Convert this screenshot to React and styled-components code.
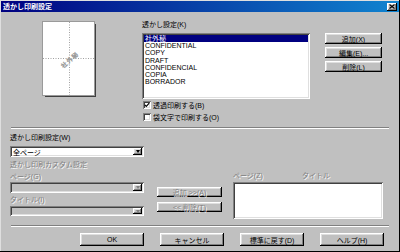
import React from 'react';
import styled, { createGlobalStyle } from 'styled-components';

const GlobalStyle = createGlobalStyle`
  html, body {
    margin: 0;
    padding: 0;
    background: #c0c0c0;
  }
  body {
    font-family: "Liberation Sans", "Noto Sans CJK JP", sans-serif;
    font-size: 7px;
    color: #000;
  }
`;

const raised = `
  box-shadow: inset -1px -1px #000, inset 1px 1px #fff,
    inset -2px -2px #808080, inset 2px 2px #dfdfdf;
`;

const sunken = `
  box-shadow: inset 1px 1px #808080, inset -1px -1px #fff,
    inset 2px 2px #404040, inset -2px -2px #dfdfdf;
`;

const Window = styled.div`
  width: 400px;
  height: 252px;
  box-sizing: border-box;
  padding: 1px;
  background: #c0c0c0;
  box-shadow: inset -1px -1px #000, inset 1px 1px #dfdfdf;
  display: flex;
  flex-direction: column;
`;

const TitleBar = styled.div`
  height: 11px;
  flex: none;
  display: flex;
  align-items: center;
  justify-content: space-between;
  padding: 0 2px;
  background: linear-gradient(90deg, #000080, #1084d0);
  color: #fff;
  font-weight: bold;
  line-height: 11px;
`;

const CloseBox = styled.div`
  width: 10px;
  height: 8px;
  background: #c0c0c0;
  ${raised}
  display: flex;
  align-items: center;
  justify-content: center;
`;

const TopSection = styled.div`
  height: 115px;
  display: flex;
  flex: none;
`;

const PreviewColumn = styled.div`
  width: 141px;
  box-sizing: border-box;
  padding: 10px 0 0 42px;
`;

const Page = styled.div`
  width: 51px;
  height: 73px;
  background: #fff;
  box-shadow: 1px 1px 0 #808080, 2px 2px 0 #404040;
  outline: 1px solid #9a9a9a;
`;

const ListColumn = styled.div`
  width: 168px;
  padding-top: 9px;
`;

const Label = styled.div`
  height: 8px;
  line-height: 8px;
  white-space: nowrap;
  margin-top: ${p => p.$mt || 0}px;
  margin-bottom: ${p => p.$mb || 0}px;
  color: ${p => (p.$disabled ? '#808080' : '#000')};
  text-shadow: ${p => (p.$disabled ? '1px 1px 0 #fff' : 'none')};
`;

const ListBox = styled.div`
  height: ${p => p.$h}px;
  box-sizing: border-box;
  padding: 2px;
  background: #fff;
  ${sunken}
  margin-top: ${p => p.$mt || 0}px;
`;

const ListItem = styled.div`
  height: 7.2px;
  line-height: 7.2px;
  padding-left: 1px;
  white-space: nowrap;
  background: ${p => (p.$selected ? '#000080' : 'transparent')};
  color: ${p => (p.$selected ? '#fff' : '#000')};
`;

const CheckRow = styled.label`
  display: flex;
  align-items: center;
  gap: 2px;
  height: 8px;
  padding-left: 1px;
  margin-top: ${p => p.$mt}px;
  white-space: nowrap;
`;

const CheckBox = styled.span`
  width: 8px;
  height: 8px;
  box-sizing: border-box;
  background: #fff;
  ${sunken}
  display: flex;
  align-items: center;
  justify-content: center;
  flex: none;
`;

const ButtonColumn = styled.div`
  margin-left: ${p => p.$ml}px;
  padding-top: ${p => p.$pt}px;
  display: flex;
  flex-direction: column;
  gap: ${p => p.$gap}px;
`;

const Button = styled.div`
  width: ${p => p.$w || 57}px;
  height: ${p => p.$h || 11}px;
  box-sizing: border-box;
  background: #c0c0c0;
  ${raised}
  display: flex;
  align-items: center;
  justify-content: center;
  white-space: nowrap;
  color: ${p => (p.$disabled ? '#808080' : '#000')};
  text-shadow: ${p => (p.$disabled ? '1px 1px 0 #fff' : 'none')};
`;

const Separator = styled.div`
  margin: 0 10px;
  height: 0;
  border-top: 1px solid #808080;
  border-bottom: 1px solid #fff;
  flex: none;
`;

const BottomSection = styled.div`
  height: 96px;
  display: flex;
  padding-left: 9px;
  flex: none;
`;

const LeftColumn = styled.div`
  width: 134px;
  padding-top: 5px;
`;

const Combo = styled.div`
  height: ${p => p.$h}px;
  margin-top: ${p => p.$mt}px;
  box-sizing: border-box;
  padding: 2px 2px 2px 3px;
  background: ${p => (p.$disabled ? '#c0c0c0' : '#fff')};
  ${sunken}
  display: flex;
  align-items: center;
  justify-content: space-between;
  white-space: nowrap;
`;

const ArrowButton = styled.div`
  width: 9px;
  height: 100%;
  box-sizing: border-box;
  background: #c0c0c0;
  ${raised}
  display: flex;
  align-items: center;
  justify-content: center;
`;

const Arrow = styled.span`
  width: 0;
  height: 0;
  border-left: 2.5px solid transparent;
  border-right: 2.5px solid transparent;
  border-top: 3px solid ${p => (p.$disabled ? '#808080' : '#000')};
`;

const RightColumn = styled.div`
  margin-left: 11px;
  width: 150px;
  padding-top: 43px;
`;

const HeaderRow = styled.div`
  display: flex;
  height: 8px;
  line-height: 8px;
  color: #808080;
  text-shadow: 1px 1px 0 #fff;
`;

const HeaderCell = styled.span`
  width: ${p => p.$w}px;
  white-space: nowrap;
`;

const ActionRow = styled.div`
  display: flex;
  justify-content: flex-end;
  gap: 16px;
  padding: 6px 15px 0 0;
`;

function Check() {
  return (
    <svg width="6" height="6" viewBox="0 0 6 6">
      <path d="M0.8 2.8 L2.3 4.4 L5.2 1.2" fill="none" stroke="#000" strokeWidth="1.2" />
    </svg>
  );
}

function ComboBox({ text, h, mt, disabled }) {
  return (
    <Combo $h={h} $mt={mt} $disabled={disabled}>
      <span>{text}</span>
      <ArrowButton>
        <Arrow $disabled={disabled} />
      </ArrowButton>
    </Combo>
  );
}

const watermarks = ['社外秘', 'CONFIDENTIAL', 'COPY', 'DRAFT', 'CONFIDENCIAL', 'COPIA', 'BORRADOR'];

export default function App() {
  return (
    <>
      <GlobalStyle />
      <Window>
        <TitleBar>
          <span>透かし印刷設定</span>
          <CloseBox>
            <svg width="6" height="5" viewBox="0 0 6 5">
              <path d="M0.5 0.5 L5.5 4.5 M5.5 0.5 L0.5 4.5" stroke="#000" strokeWidth="1.1" />
            </svg>
          </CloseBox>
        </TitleBar>

        <TopSection>
          <PreviewColumn>
            <Page>
              <svg width="51" height="73" viewBox="0 0 51 73">
                <line x1="26.5" y1="0" x2="26.5" y2="73" stroke="#a0a0a0" strokeDasharray="1 1.5" />
                <line x1="0" y1="36.5" x2="51" y2="36.5" stroke="#a0a0a0" strokeDasharray="1 1.5" />
                <text
                  x="27"
                  y="40"
                  fontSize="6"
                  textAnchor="middle"
                  fill="#d0d0d0"
                  stroke="#9a9a9a"
                  strokeWidth="0.4"
                  letterSpacing="1"
                  transform="rotate(-42 27 38)"
                  fontFamily="Noto Sans CJK JP, sans-serif"
                >
                  社外秘
                </text>
              </svg>
            </Page>
          </PreviewColumn>

          <ListColumn>
            <Label $mb={4}>透かし設定(K)</Label>
            <ListBox $h={66}>
              {watermarks.map((w, i) => (
                <ListItem key={w + i} $selected={i === 0}>{w}</ListItem>
              ))}
            </ListBox>
            <CheckRow $mt={2}>
              <CheckBox><Check /></CheckBox>
              透過印刷する(B)
            </CheckRow>
            <CheckRow $mt={4}>
              <CheckBox />
              袋文字で印刷する(O)
            </CheckRow>
          </ListColumn>

          <ButtonColumn $ml={15} $pt={21} $gap={3}>
            <Button>追加(X)</Button>
            <Button>編集(E)...</Button>
            <Button>削除(L)</Button>
          </ButtonColumn>
        </TopSection>

        <Separator />

        <BottomSection>
          <LeftColumn>
            <Label>透かし印刷設定(W)</Label>
            <ComboBox text="全ページ" h={11} mt={4} />
            <Label $mt={4} $disabled>透かし印刷カスタム設定</Label>
            <Label $mt={4} $disabled>ページ(G)</Label>
            <ComboBox text="" h={11} mt={1} disabled />
            <Label $mt={3} $disabled>タイトル(I)</Label>
            <ComboBox text="" h={10} mt={2} disabled />
          </LeftColumn>

          <ButtonColumn $ml={13} $pt={58} $gap={5}>
            <Button $w={65} $h={10} $disabled>追加 &gt;&gt;(A)</Button>
            <Button $w={65} $h={10} $disabled>&lt;&lt; 削除(T)</Button>
          </ButtonColumn>

          <RightColumn>
            <HeaderRow>
              <HeaderCell $w={69}>ページ(Z)</HeaderCell>
              <HeaderCell $w={81}>タイトル</HeaderCell>
            </HeaderRow>
            <ListBox $h={37} $mt={2} />
          </RightColumn>
        </BottomSection>

        <Separator />

        <ActionRow>
          <Button $w={64} $h={13}>OK</Button>
          <Button $w={64} $h={13}>キャンセル</Button>
          <Button $w={64} $h={13}>標準に戻す(D)</Button>
          <Button $w={64} $h={13}>ヘルプ(H)</Button>
        </ActionRow>
      </Window>
    </>
  );
}
